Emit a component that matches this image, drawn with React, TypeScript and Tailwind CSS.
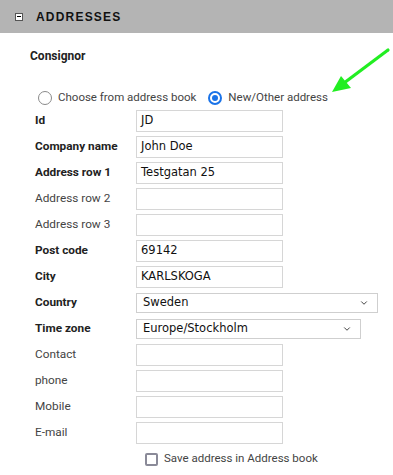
import { ChevronDown } from "lucide-react";

const rows = [
  { label: "Id", bold: true, value: "JD" },
  { label: "Company name", bold: true, value: "John Doe" },
  { label: "Address row 1", bold: true, value: "Testgatan 25" },
  { label: "Address row 2", bold: false, value: "" },
  { label: "Address row 3", bold: false, value: "" },
  { label: "Post code", bold: true, value: "69142" },
  { label: "City", bold: true, value: "KARLSKOGA" },
  { label: "Country", bold: true, select: "Sweden", width: "w-[242px]" },
  { label: "Time zone", bold: true, select: "Europe/Stockholm", width: "w-[225px]" },
  { label: "Contact", bold: false, value: "" },
  { label: "phone", bold: false, value: "" },
  { label: "Mobile", bold: false, value: "" },
  { label: "E-mail", bold: false, value: "" },
];

export default function App() {
  return (
    <div className="relative w-[393px] h-[475px] bg-white overflow-hidden font-['Roboto',sans-serif]">
      {/* entête de section */}
      <div className="h-[33px] bg-[#b4b4b4] flex items-center">
        <div className="ml-[15px] w-[8px] h-[8px] bg-white border border-[#555] flex items-center justify-center">
          <div className="w-[4px] h-[1px] bg-black" />
        </div>
        <span className="ml-[13px] text-[12px] font-bold tracking-[1.2px] text-[#111] font-['Liberation_Sans',sans-serif]">
          ADDRESSES
        </span>
      </div>

      <div className="mt-[15px] ml-[30px] h-[16px] leading-[16px] text-[12px] font-bold text-[#222]">Consignor</div>

      {/* choix d'adresse */}
      <div className="mt-[24px] h-[20px] flex items-center text-[11.5px] text-[#444]">
        <span className="ml-[38px] w-[14px] h-[14px] rounded-full border border-[#8a8a8a] box-border" />
        <span className="ml-[6px]">Choose from address book</span>
        <span className="ml-[12px] w-[14px] h-[14px] rounded-full border-[2px] border-[#1a73e8] box-border flex items-center justify-center">
          <span className="w-[6px] h-[6px] rounded-full bg-[#1a73e8]" />
        </span>
        <span className="ml-[6px]">New/Other address</span>
      </div>

      {/* champs du formulaire */}
      <div className="flex flex-col">
        {rows.map((r) => (
          <div key={r.label} className="h-[26px] flex items-center">
            <div
              className={`ml-[35px] w-[101px] text-[11.8px] ${r.bold ? "font-bold text-[#222]" : "text-[#444]"}`}
            >
              {r.label}
            </div>
            {r.select ? (
              <div
                className={`${r.width} h-[20px] border border-[#cfcfcf] flex items-center justify-between pl-[6px] pr-[8px] text-[11.5px] text-[#111] font-['DejaVu_Sans',sans-serif]`}
              >
                <span>{r.select}</span>
                <ChevronDown size={10} strokeWidth={2.2} className="text-[#333]" />
              </div>
            ) : (
              <div className="w-[147px] h-[22px] border border-[#d6d6d6] flex items-center pl-[4px] text-[11.5px] text-[#111] font-['DejaVu_Sans',sans-serif]">
                {r.value}
              </div>
            )}
          </div>
        ))}
        <div className="h-[26px] flex items-center">
          <span className="ml-[145px] w-[13px] h-[13px] rounded-[2px] border-[2px] border-[#8a8a98] box-border" />
          <span className="ml-[6px] text-[11.5px] text-[#444]">Save address in Address book</span>
        </div>
      </div>

      {/* flèche verte */}
      <svg className="absolute left-[325px] top-[45px]" width="68" height="55" viewBox="325 45 68 55">
        <line x1="388" y1="50" x2="340" y2="86" stroke="#22ee22" strokeWidth="3.2" strokeLinecap="round" />
        <polygon points="332,92 341,76 351,88" fill="#22ee22" />
      </svg>
    </div>
  );
}
